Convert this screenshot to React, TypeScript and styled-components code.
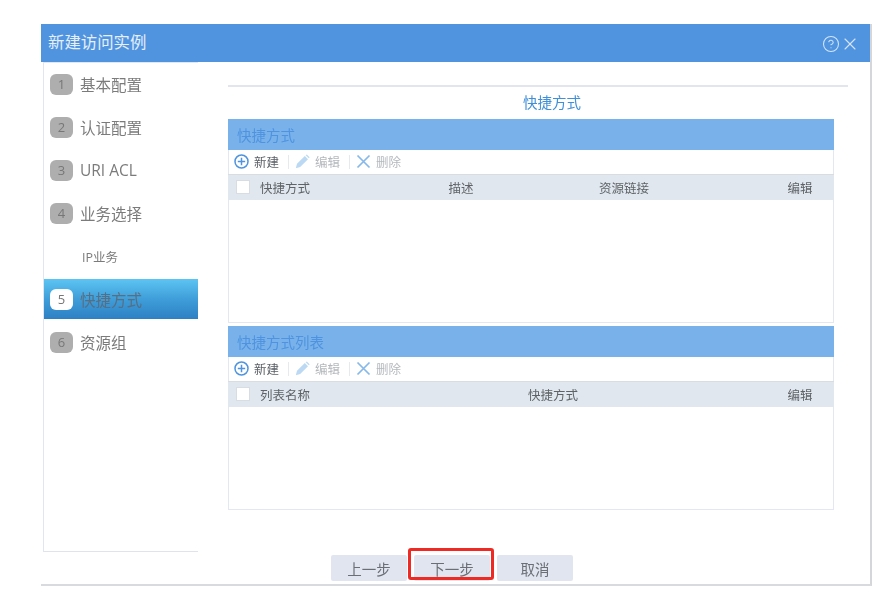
import React from "react";
import styled, { createGlobalStyle } from "styled-components";
import { CircleHelp, X } from "lucide-react";

const Global = createGlobalStyle`
  html, body { margin: 0; padding: 0; background: #fff; }
  body { font-family: "Open Sans", "Noto Sans CJK SC", "Liberation Sans", sans-serif; }
  * { box-sizing: border-box; }
`;

const Page = styled.div`
  width: 885px;
  height: 602px;
  padding: 24px 0 0 41px;
  overflow: hidden;
  filter: blur(0.45px);
`;

const Dialog = styled.div`
  width: 831px;
  height: 562px;
  display: flex;
  flex-direction: column;
  border-right: 2px solid #d4d6da;
  border-bottom: 2px solid #d8dadd;
`;

const Header = styled.header`
  height: 38px;
  flex: none;
  background: #5094e0;
  color: #e6effa;
  font-size: 16.4px;
  display: flex;
  align-items: center;
  justify-content: space-between;
  padding: 0 10px 5px 7px;
`;

const HeaderIcons = styled.div`
  display: flex;
  align-items: center;
  margin-top: 6px;
  color: #d5e5f7;
`;

const Body = styled.div`
  display: flex;
  height: 490px;
  flex: none;
`;

const Sidebar = styled.nav`
  margin-left: 2px;
  width: 155px;
  flex: none;
  border-left: 1.5px solid #dfe5f3;
  border-top: 1px solid #dfe8f6;
  border-bottom: 1px solid #dfe3ec;
  padding-top: 1px;
  display: flex;
  flex-direction: column;
`;

const Step = styled.div<{ $active?: boolean }>`
  height: 40px;
  margin-bottom: 3px;
  display: flex;
  align-items: center;
  padding-left: 6px;
  gap: 7px;
  font-size: 15.5px;
  color: ${(p) => (p.$active ? "#566f84" : "#7b7b7b")};
  background: ${(p) =>
    p.$active ? "linear-gradient(#5cc4f3, #3f9ed9 50%, #2d80c4)" : "transparent"};
`;

const Badge = styled.span<{ $active?: boolean }>`
  width: 23px;
  height: 21px;
  border-radius: 6px;
  background: ${(p) => (p.$active ? "#fff" : "#aeaeae")};
  color: #777;
  font-size: 13px;
  display: flex;
  align-items: center;
  justify-content: center;
`;

const SubStep = styled.div`
  height: 40px;
  margin-bottom: 3px;
  display: flex;
  align-items: center;
  padding-left: 38px;
  font-size: 12.5px;
  color: #7b7b7b;
`;

const Main = styled.main`
  flex: 1;
  padding: 23px 0 0 30px;
  display: flex;
  flex-direction: column;
`;

const Rule = styled.div`
  width: 620px;
  height: 1.5px;
  background: #e2e5ee;
`;

const Heading = styled.div`
  width: 606px;
  margin-left: 21px;
  height: 32px;
  display: flex;
  align-items: center;
  justify-content: center;
  padding-bottom: 2px;
  font-size: 14.5px;
  color: #3f8fd9;
`;

const Panel = styled.section<{ $height: number }>`
  width: 606px;
  height: ${(p) => p.$height}px;
  border: 1px solid #e3e7f3;
  border-top: 0;
  margin-bottom: 3px;
  display: flex;
  flex-direction: column;
`;

const PanelTitle = styled.div`
  height: 31px;
  flex: none;
  margin: 0 -1px;
  background: #79b2ea;
  color: #4f93e0;
  font-size: 14.5px;
  display: flex;
  align-items: center;
  padding: 0 9px;
`;

const Toolbar = styled.div`
  height: 24px;
  flex: none;
  display: flex;
  align-items: center;
  padding-left: 5px;
  font-size: 12.5px;
`;

const Tool = styled.span<{ $disabled?: boolean }>`
  display: flex;
  align-items: center;
  gap: 5px;
  color: ${(p) => (p.$disabled ? "#b4b8bd" : "#5a5f66")};
`;

const Sep = styled.span`
  width: 1px;
  height: 14px;
  background: #e6e9ee;
  margin: 0 6px 0 9px;
`;

const TableHead = styled.div<{ $columns: string }>`
  height: 26px;
  flex: none;
  margin: 0 -1px;
  background: #e0e7ee;
  border-top: 1px solid #d9dde2;
  display: grid;
  grid-template-columns: ${(p) => p.$columns};
  align-items: center;
  font-size: 12.5px;
  color: #5f6368;
`;

const Check = styled.span`
  width: 14px;
  height: 14px;
  margin-left: 8px;
  background: #fff;
  border: 1px solid #d8dde3;
`;

const Cell = styled.span<{ $center?: boolean }>`
  text-align: ${(p) => (p.$center ? "center" : "left")};
  white-space: nowrap;
`;

const Footer = styled.div`
  display: flex;
  gap: 7px;
  padding: 3px 0 0 290px;
`;

const Button = styled.div`
  position: relative;
  width: 76px;
  height: 26px;
  background: #e0e5f0;
  border-radius: 2px;
  color: #6b6f75;
  font-size: 14.5px;
  display: flex;
  align-items: center;
  justify-content: center;
`;

const Highlight = styled.div`
  position: absolute;
  left: -6px;
  right: -4px;
  top: -7px;
  bottom: 1px;
  border: 3px solid #ee2a24;
  border-radius: 3px;
`;

const PlusIcon = () => (
  <svg width="15" height="15" viewBox="0 0 15 15" fill="none" stroke="#4f94de" strokeWidth="1.5">
    <circle cx="7.5" cy="7.5" r="6.5" />
    <path d="M3.8 7.5h7.4M7.5 3.8v7.4" />
  </svg>
);

const PencilIcon = () => (
  <svg width="15" height="15" viewBox="0 0 15 15" fill="#bcd9f4">
    <path d="M0.8 14.2 L2 9.8 L9.8 2 L13 5.2 L5.2 13 Z" />
    <path d="M10.7 1.2 L11.8 0.4 L14.6 3.2 L13.8 4.3 Z" />
  </svg>
);

const CrossIcon = () => (
  <svg width="15" height="15" viewBox="0 0 15 15" fill="none" stroke="#86b8ea" strokeWidth="1.7">
    <path d="M1.5 1.5l12 12M13.5 1.5l-12 12" />
  </svg>
);

const ToolRow = () => (
  <Toolbar>
    <Tool><PlusIcon />新建</Tool>
    <Sep />
    <Tool $disabled><PencilIcon />编辑</Tool>
    <Sep />
    <Tool $disabled><CrossIcon />删除</Tool>
  </Toolbar>
);

const steps = [
  { n: "1", label: "基本配置" },
  { n: "2", label: "认证配置" },
  { n: "3", label: "URI ACL" },
  { n: "4", label: "业务选择" },
];

export default function App() {
  return (
    <Page>
      <Global />
      <Dialog>
        <Header>
          <span>新建访问实例</span>
          <HeaderIcons>
            <CircleHelp size={18} strokeWidth={1.4} />
            <X size={20} strokeWidth={1.3} />
          </HeaderIcons>
        </Header>
        <Body>
          <Sidebar>
            {steps.map((s) => (
              <Step key={s.n}><Badge>{s.n}</Badge>{s.label}</Step>
            ))}
            <SubStep>IP业务</SubStep>
            <Step $active><Badge $active>5</Badge>快捷方式</Step>
            <Step><Badge>6</Badge>资源组</Step>
          </Sidebar>
          <Main>
            <Rule />
            <Heading>快捷方式</Heading>
            <Panel $height={204}>
              <PanelTitle>快捷方式</PanelTitle>
              <ToolRow />
              <TableHead $columns="32px 180px 42px 284px 68px">
                <Check />
                <Cell>快捷方式</Cell>
                <Cell $center>描述</Cell>
                <Cell $center>资源链接</Cell>
                <Cell $center>编辑</Cell>
              </TableHead>
            </Panel>
            <Panel $height={184}>
              <PanelTitle>快捷方式列表</PanelTitle>
              <ToolRow />
              <TableHead $columns="32px 80px 426px 68px">
                <Check />
                <Cell>列表名称</Cell>
                <Cell $center>快捷方式</Cell>
                <Cell $center>编辑</Cell>
              </TableHead>
            </Panel>
          </Main>
        </Body>
        <Footer>
          <Button>上一步</Button>
          <Button>下一步<Highlight /></Button>
          <Button>取消</Button>
        </Footer>
      </Dialog>
    </Page>
  );
}
